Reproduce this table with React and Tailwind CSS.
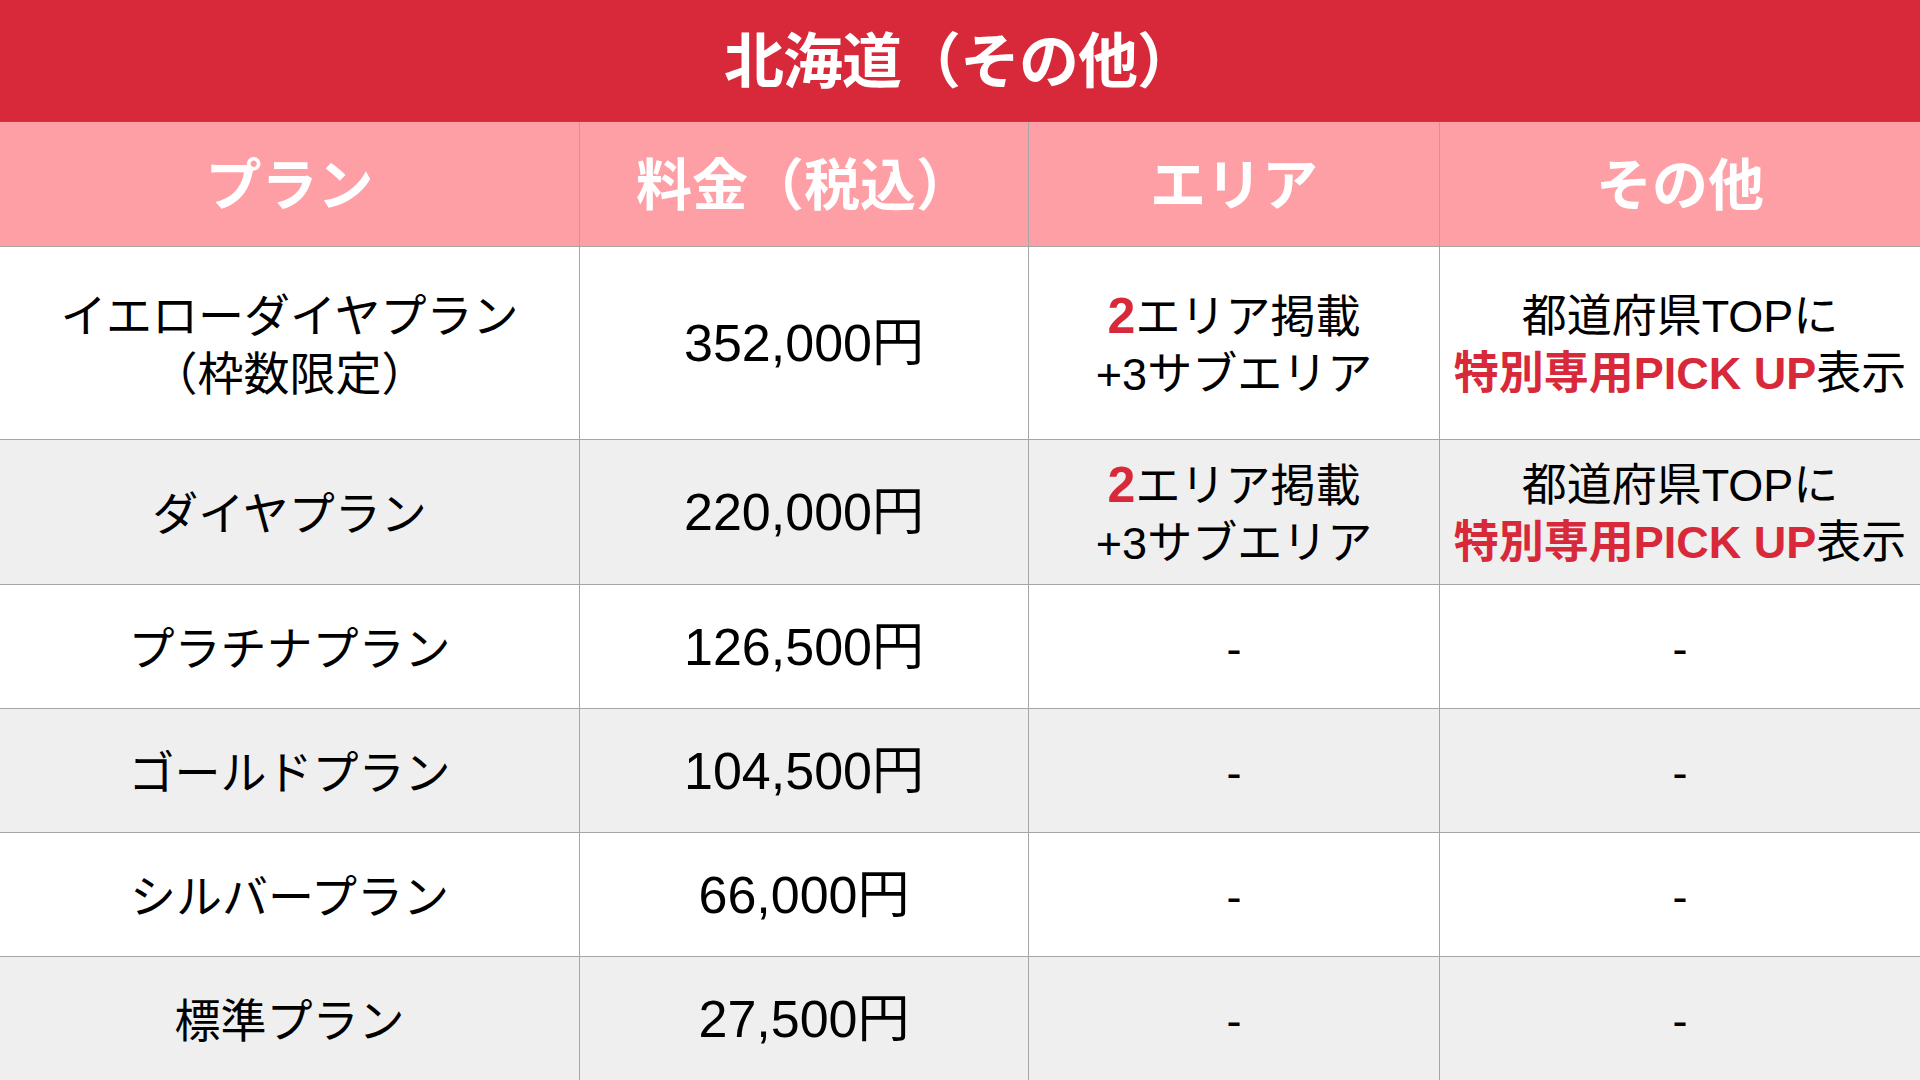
import React from "react";

const rows = [
  {
    plan: ["イエローダイヤプラン", "（枠数限定）"],
    price: "352,000",
    area: true,
    other: true,
    bg: "bg-white",
    h: "h-[193px]",
  },
  { plan: ["ダイヤプラン"], price: "220,000", area: true, other: true, bg: "bg-[#efefef]", h: "h-[145px]" },
  { plan: ["プラチナプラン"], price: "126,500", bg: "bg-white", h: "h-[124px]" },
  { plan: ["ゴールドプラン"], price: "104,500", bg: "bg-[#efefef]", h: "h-[124px]" },
  { plan: ["シルバープラン"], price: "66,000", bg: "bg-white", h: "h-[124px]" },
  { plan: ["標準プラン"], price: "27,500", bg: "bg-[#efefef]", h: "h-[124px]" },
];

const font = { fontFamily: '"Liberation Sans", "Noto Sans CJK JP", sans-serif' };

function Cell({ children, className = "" }) {
  return (
    <div
      className={`flex flex-col items-center justify-center text-center border-r border-b border-[#a6a6a6] last:border-r-0 ${className}`}
    >
      {children}
    </div>
  );
}

export default function App() {
  return (
    <div className="w-[1920px] h-[1080px] overflow-hidden bg-white text-black" style={font}>
      {/* Title */}
      <div className="h-[122px] bg-[#d8293a] border-b border-[#b3404a] flex items-center justify-center pt-[4px]">
        <h1 className="text-white font-bold text-[60px] leading-none tracking-[-1px]">北海道（その他）</h1>
      </div>

      {/* Header */}
      <div className="grid grid-cols-[580px_449px_411px_480px] h-[125px] bg-[#fe9ea5]">
        {["プラン", "料金（税込）", "エリア", "その他"].map((t) => (
          <Cell key={t} className="text-white font-bold text-[56px] leading-none pt-[4px]">
            {t}
          </Cell>
        ))}
      </div>

      {/* Body */}
      {rows.map((r) => (
        <div key={r.price} className={`grid grid-cols-[580px_449px_411px_480px] ${r.h} ${r.bg}`}>
          <Cell className="text-[46px] leading-[58px] pt-[4px]">
            {r.plan.map((l) => (
              <span key={l}>{l}</span>
            ))}
          </Cell>
          <Cell className="text-[52px] leading-none">
            <span>{r.price}円</span>
          </Cell>
          <Cell className="text-[45px] leading-[57px] pt-[4px]">
            {r.area ? (
              <>
                <span>
                  <span className="text-[#d8293a] font-bold text-[50px]">2</span>エリア掲載
                </span>
                <span>+3サブエリア</span>
              </>
            ) : (
              <span>-</span>
            )}
          </Cell>
          <Cell className="text-[45px] leading-[57px] pt-[4px]">
            {r.other ? (
              <>
                <span>都道府県TOPに</span>
                <span className="whitespace-nowrap">
                  <span className="text-[#d8293a] font-bold">特別専用PICK UP</span>表示
                </span>
              </>
            ) : (
              <span>-</span>
            )}
          </Cell>
        </div>
      ))}
    </div>
  );
}
